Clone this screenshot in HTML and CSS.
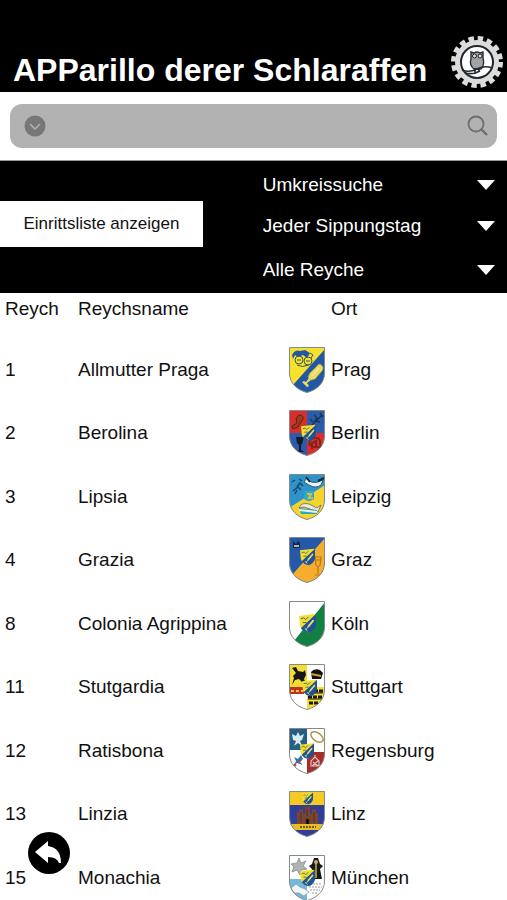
FILE: index.html
```html
<!DOCTYPE html>
<html lang="de">
<head>
  <meta charset="UTF-8">
  <meta name="viewport" content="width=device-width, initial-scale=1.0">
  <title>APParillo derer Schlaraffen</title>
  <link rel="stylesheet" href="styles.css">
</head>
<body>
  <!-- shared crest parts -->
  <svg class="defs" width="0" height="0" aria-hidden="true">
    <defs>
      <path id="shield" d="M.5 .5H35.5V26C35.5 36 28 43 18 45.5C8 43 .5 36 .5 26Z"/>
      <clipPath id="clip"><use href="#shield"/></clipPath>
      <symbol id="mini" viewBox="0 0 18 20">
        <path fill="#f4df2c" d="M0 2L17 0V11Q16 17 10 20Q2 17 1 12Z"/>
        <path fill="#1d5199" d="M18 0V12Q16 18 10 20Q5 19 2 15Z"/>
        <path stroke="#e8dc63" stroke-width="2" stroke-linecap="round" d="M10 13L15 7"/>
        <path stroke="#e8dc63" d="M7 17L10 13M6 15L9 18"/>
        <path fill="none" stroke="#33607b" d="M2 5L5 4L7 6L10 3M4 9H8"/>
      </symbol>
    </defs>
  </svg>

  <header class="header">
    <h1>APParillo derer Schlaraffen</h1>
    <svg class="logo" viewBox="0 0 54 54" aria-hidden="true">
      <circle cx="27" cy="27" r="23.5" fill="none" stroke="#dcdcdc" stroke-width="5" stroke-dasharray="5.4 3.83"/>
      <circle cx="27" cy="27" r="22" fill="#dcdcdc"/>
      <circle cx="27" cy="27" r="16" fill="#fff" stroke="#20262e" stroke-width="2"/>
      <path fill="#a0a3a8" stroke="#292e37" stroke-width="1.4" d="M21 17L24 18Q27 16 30 18L33 17V23Q35 30 31 34H24Q19 30 21 24Z"/>
      <circle cx="24.5" cy="21" r="2" fill="#ddd" stroke="#222"/>
      <circle cx="30" cy="21" r="2" fill="#ddd" stroke="#222"/>
      <path fill="none" stroke="#222831" stroke-width="1.6" d="M12 35Q19 38 27 34T42 33M15 38Q23 40 30 36M25 33V38M29 33V37"/>
    </svg>
  </header>

  <form class="search">
    <div class="search-box">
      <button type="button" class="icon-button" aria-label="Suchoptionen">
        <svg width="22" height="22" viewBox="0 0 22 22"><circle cx="11" cy="11" r="10.5" fill="#777"/><path d="M6 9L11 14L16 9" fill="none" stroke="#b2b2b2" stroke-width="1.5"/></svg>
      </button>
      <input type="text" aria-label="Suche">
      <button type="submit" class="icon-button" aria-label="Suchen">
        <svg width="22" height="22" viewBox="0 0 22 22" fill="none" stroke="#6e6e6e"><circle cx="9" cy="9" r="7.5" stroke-width="1.8"/><path stroke-width="2.4" d="M14 14L20 20"/></svg>
      </button>
    </div>
  </form>

  <section class="filters">
    <button type="button" class="list-button">Einrittsliste anzeigen</button>
    <div class="selects">
      <div class="select">
        <select aria-label="Umkreis"><option>Umkreissuche</option></select>
        <svg width="18" height="10" viewBox="0 0 18 10"><path fill="#fff" d="M0 0H18L9 10Z"/></svg>
      </div>
      <div class="select">
        <select aria-label="Sippungstag"><option>Jeder Sippungstag</option></select>
        <svg width="18" height="10" viewBox="0 0 18 10"><path fill="#fff" d="M0 0H18L9 10Z"/></svg>
      </div>
      <div class="select last">
        <select aria-label="Reyche"><option>Alle Reyche</option></select>
        <svg width="18" height="10" viewBox="0 0 18 10"><path fill="#fff" d="M0 0H18L9 10Z"/></svg>
      </div>
    </div>
  </section>

  <table class="reyche">
    <thead>
      <tr><th class="number">Reych</th><th class="name">Reychsname</th><td class="crest"></td><th>Ort</th></tr>
    </thead>
    <tbody>
      <tr>
        <td>1</td><td>Allmutter Praga</td>
        <td><svg viewBox="0 0 36 46"><g clip-path="url(#clip)">
          <path fill="#f6e22c" d="M0 0H36V46H0Z"/><path fill="#2257a6" d="M36 2V46H8L4 38Z"/>
          <path fill="#2257a6" d="M3 8Q6 2 11 4L16 3L21 6L18 11L14 8L9 10L6 8L4 12Z"/>
          <g fill="none" stroke="#3b5466"><circle cx="10" cy="13" r="4"/><circle cx="19" cy="14" r="4"/><path d="M8 13H12M17 14H21M8 18Q13 21 20 18M21 6L24 8L22 11"/></g>
          <path fill="#ebdc67" stroke="#a89a3f" stroke-width=".7" d="M31 17Q36 20 33 24L26 32Q22 34 20 32Q18 30 21 26L28 19Q29 17 31 17Z"/>
          <path fill="#ebdc67" d="M20 31L22 33L18 36L20 39L18 40L13 35L15 34L17 35Z"/><path stroke="#fff7a0" d="M30 21L23 29"/>
        </g><use href="#shield" class="outline"/></svg></td>
        <td>Prag</td>
      </tr>
      <tr>
        <td>2</td><td>Berolina</td>
        <td><svg viewBox="0 0 36 46"><g clip-path="url(#clip)">
          <path fill="#d92e2b" d="M0 0H36V46H0Z"/><path fill="#2b5cac" d="M18 0H36V23H18ZM0 23H18V46H0Z"/>
          <path fill="#9b3d1b" stroke="#592519" d="M10 5Q15 5 14 9L9 17L4 19L3 16L8 13L7 8Z"/>
          <path fill="none" stroke="#173459" stroke-width="1.5" d="M22 16L33 5M25 5L28 8L26 11L31 12M31 3L34 7M21 9L24 12"/>
          <path fill="#151a25" d="M7 27H15L13 34L12 35V40L15 42H7L10 40V35L8 33Z"/>
          <path fill="none" stroke="#85231b" stroke-width="2" d="M21 36Q19 29 25 28Q32 27 31 34L33 37H27V31L23 33V39M23 37H28"/>
        </g><use href="#mini" x="12" y="14" width="15" height="18"/><use href="#shield" class="outline"/></svg></td>
        <td>Berlin</td>
      </tr>
      <tr>
        <td>3</td><td>Lipsia</td>
        <td><svg viewBox="0 0 36 46"><g clip-path="url(#clip)">
          <path fill="#2d94cb" d="M0 0H36V46H0Z"/><path fill="#f6d42d" d="M36 11V46H8L0 34Z"/>
          <path fill="none" stroke="#174965" stroke-width="1.5" d="M4 17L9 13L12 16M8 13L11 9L14 12M3 8L6 6M10 5L13 7M6 20L8 16"/>
          <path fill="#e8f4f6" stroke="#244051" stroke-width=".8" d="M18 4L22 8Q27 10 34 6L32 11Q27 15 20 11L15 8Z"/>
          <path stroke="#182734" stroke-width="2" d="M29 7L35 4M17 3L21 8"/>
          <path fill="#36a9c4" d="M16 17H25V25Q20 29 15 25Z"/><path fill="none" stroke="#d4c13a" stroke-width="2" d="M18 20H22L20 24H24"/>
          <path fill="#e9edda" stroke="#64645a" stroke-width=".8" d="M10 34Q12 28 20 30L28 34L32 31L29 38L21 35L15 33Z"/>
          <path fill="#30a4c5" d="M10 34L28 36V40H12Z"/><path stroke="#eef3dd" stroke-width="2" d="M10 36L28 38"/>
        </g><use href="#shield" class="outline"/></svg></td>
        <td>Leipzig</td>
      </tr>
      <tr>
        <td>4</td><td>Grazia</td>
        <td><svg viewBox="0 0 36 46"><g clip-path="url(#clip)">
          <path fill="#2559a8" d="M0 0H36V46H0Z"/><path fill="#f5ad2d" d="M36 1V46H8L3 38Z"/>
          <path fill="#17263d" d="M4 4L7 7L9 4L11 6V11H4Z"/><path fill="#a7b8c2" d="M5 8H10V10H5Z"/>
          <path fill="none" stroke="#b7731b" stroke-width="1.2" d="M26 20H32L31 28Q29 31 27 28ZM29 30V37M26 38H32M27 23H31"/>
        </g><use href="#mini" x="11" y="11" width="15" height="18"/><use href="#shield" class="outline"/></svg></td>
        <td>Graz</td>
      </tr>
      <tr>
        <td>8</td><td>Colonia Agrippina</td>
        <td><svg viewBox="0 0 36 46"><g clip-path="url(#clip)">
          <path fill="#fff" d="M0 0H36V46H0Z"/><path fill="#118143" d="M36 1V46H8L5 40Z"/>
        </g><use href="#mini" x="10" y="13" width="17" height="19"/><use href="#shield" class="outline"/></svg></td>
        <td>Köln</td>
      </tr>
      <tr>
        <td>11</td><td>Stutgardia</td>
        <td><svg viewBox="0 0 36 46"><g clip-path="url(#clip)">
          <path fill="#fff" d="M0 0H36V46H0Z"/><path fill="#f4dd35" d="M0 0H18V23H0ZM18 23H36V46H18Z"/>
          <path fill="#171714" d="M3 4L7 3L9 7L14 8L16 6L17 11L15 15L17 20L13 18L10 15L6 16L3 21L5 14L4 12L7 9Z"/>
          <path fill="#111" d="M22 8Q25 4 31 6L34 9L32 15H23Z"/><path stroke="#c7a13b" stroke-width="2" d="M22 10L32 12"/>
          <path fill="#c52e25" d="M0 23H15V30H0Z"/><path fill="none" stroke="#ecd149" stroke-width="2" stroke-dasharray="3 2" d="M2 27H14"/>
          <path fill="none" stroke="#191915" stroke-width="3" stroke-dasharray="4 1" d="M20 27H34M19 33H34M20 39H30"/>
          <path stroke="#191915" d="M20 29H34M19 35H33"/>
        </g><use href="#mini" x="13" y="15" width="15" height="18"/><use href="#shield" class="outline"/></svg></td>
        <td>Stuttgart</td>
      </tr>
      <tr>
        <td>12</td><td>Ratisbona</td>
        <td><svg viewBox="0 0 36 46"><g clip-path="url(#clip)">
          <path fill="#fff" d="M0 0H36V46H0Z"/><path fill="#255f86" d="M0 0H18V22H0Z"/><path fill="#a52e2c" d="M18 24H36V46H18Z"/>
          <path fill="#d8eaf2" d="M3 6L7 8L9 4L11 8L15 6L13 12L11 13L13 18L9 15L5 18L7 13L4 12Z"/>
          <ellipse cx="28" cy="9" rx="7" ry="4" transform="rotate(35 28 9)" fill="none" stroke="#aa9749" stroke-width="1.5"/>
          <path fill="#277bb3" d="M5 29L9 31L12 27L14 31L11 34L14 37L8 35L5 38L7 33Z"/><path stroke="#c63833" stroke-width="2" d="M9 34L12 32M5 36L7 38"/>
          <path fill="none" stroke="#e1c5bd" stroke-width="1.2" d="M22 37V33L26 29L30 33V38M21 38H32M24 34L29 38M29 33L23 38M26 27V30"/>
        </g><use href="#mini" x="11" y="14" width="14" height="18"/><use href="#shield" class="outline"/></svg></td>
        <td>Regensburg</td>
      </tr>
      <tr>
        <td>13</td><td>Linzia</td>
        <td><svg viewBox="0 0 36 46"><g clip-path="url(#clip)">
          <path fill="#303e98" d="M0 0H36V46H0Z"/><path fill="#f3cb23" d="M0 0H36V14H0Z"/>
          <path fill="#7b442e" d="M8 33V21H10V18H14V23H16V16H21V23H23V18H27V22H29V33Z"/>
          <path stroke="#4a3230" d="M12 21V32M18 18V25M25 21V32M17 33V28H20V33"/>
          <path fill="#e7bd25" d="M1 33H35L33 39H4Z"/><path stroke="#735a23" stroke-width="2" stroke-dasharray="2 1" d="M11 36H27"/>
        </g><use href="#mini" x="13" y="1" width="11" height="13"/><use href="#shield" class="outline"/></svg></td>
        <td>Linz</td>
      </tr>
      <tr>
        <td>15</td><td>Monachia</td>
        <td><svg viewBox="0 0 36 46"><g clip-path="url(#clip)">
          <path fill="#fff" d="M0 0H36V46H0Z"/><path fill="#72b9df" d="M0 24H18V46H0Z"/>
          <path fill="#aeb3b4" stroke="#858c8f" stroke-width=".8" d="M10 3L12 8L17 6L14 11L18 14L12 15L11 20L8 15L3 17L5 12L2 9L8 8Z"/>
          <path fill="#171918" d="M25 3H29L31 9L34 11L31 14L33 24H20L23 14L20 11L23 9Z"/><path stroke="#d9ae2b" stroke-width="1.5" d="M27 8V23"/><circle cx="27" cy="7" r="2" fill="#d9a673"/>
          <path fill="#f3f5f4" stroke="#899fa9" stroke-width=".8" d="M2 33L7 29L11 32L16 34L20 37L15 41L10 38L5 38Z"/>
          <path stroke="#969c9c" stroke-dasharray="2 1" d="M21 29H33M20 32H33M21 35H31M23 38H29"/>
        </g><use href="#mini" x="11" y="14" width="15" height="18"/><use href="#shield" class="outline"/></svg></td>
        <td>München</td>
      </tr>
    </tbody>
  </table>

  <button type="button" class="back" aria-label="Zurück">
    <svg width="42" height="42" viewBox="0 0 42 42"><circle cx="21" cy="21" r="21"/><path fill="#fff" d="M7 20L20 9V14Q33 16 33 31H31Q29 25 20 25V31Z"/></svg>
  </button>
</body>
</html>
```
FILE: styles.css
```css
* {
  box-sizing: border-box;
}

body {
  margin: 0;
  background: #fff;
  color: #111;
  font-family: "Liberation Sans", Arial, sans-serif;
  font-size: 19px;
}

button,
input,
select {
  font: inherit;
  border: none;
  margin: 0;
  padding: 0;
}

button {
  cursor: pointer;
}

svg {
  display: block;
}

.defs {
  position: absolute;
}

.header {
  display: flex;
  align-items: flex-end;
  justify-content: space-between;
  height: 92px;
  padding: 0 3px 3px 13px;
  background: #000;
  color: #fff;
}

h1 {
  margin: 0;
  font-size: 32px;
  line-height: 37px;
  white-space: nowrap;
}

.logo {
  width: 54px;
  height: 54px;
  flex: none;
}

.search {
  padding: 12px 10px;
  border-bottom: 1px solid #999;
}

.search-box {
  display: flex;
  align-items: center;
  height: 44px;
  padding: 0 8px 0 14px;
  border-radius: 12px;
  background: #b2b2b2;
}

.search-box input {
  flex: 1;
  min-width: 0;
  height: 100%;
  padding: 0 8px;
  background: none;
  outline: none;
}

.icon-button {
  background: none;
}

.filters {
  display: grid;
  grid-template-columns: 40% 1fr;
  align-items: center;
  background: #000;
  color: #fff;
}

.list-button {
  height: 46px;
  margin-bottom: 6px;
  background: #fff;
  color: #111;
  font-size: 17px;
}

.selects {
  padding: 3px 0 0 60px;
}

.select {
  display: grid;
  align-items: center;
  height: 41px;
}

.select.last {
  height: 47px;
}

.select select,
.select svg {
  grid-area: 1 / 1;
}

.select select {
  width: 100%;
  height: 100%;
  appearance: none;
  background: none;
  color: #fff;
}

.select option {
  color: #111;
}

.select svg {
  justify-self: end;
  margin-right: 12px;
  pointer-events: none;
}

.reyche {
  width: 100%;
  table-layout: fixed;
  border-collapse: collapse;
}

.reyche th,
.reyche td {
  padding: 0;
  text-align: left;
  font-weight: normal;
}

.reyche th:first-child,
.reyche td:first-child {
  padding-left: 5px;
}

.reyche thead tr {
  height: 45px;
}

.reyche thead th {
  padding-top: 5px;
  vertical-align: top;
}

.reyche tbody tr {
  height: 63px;
}

.reyche tbody tr:nth-child(even) {
  height: 64px;
}

.reyche .number {
  width: 78px;
}

.reyche .name {
  width: 211px;
}

.reyche .crest {
  width: 42px;
}

.reyche td svg {
  width: 36px;
  height: 46px;
}

.outline {
  fill: none;
  stroke: #85898a;
}

.back {
  position: fixed;
  left: 28px;
  bottom: 26px;
  border-radius: 50%;
  background: none;
}
```
